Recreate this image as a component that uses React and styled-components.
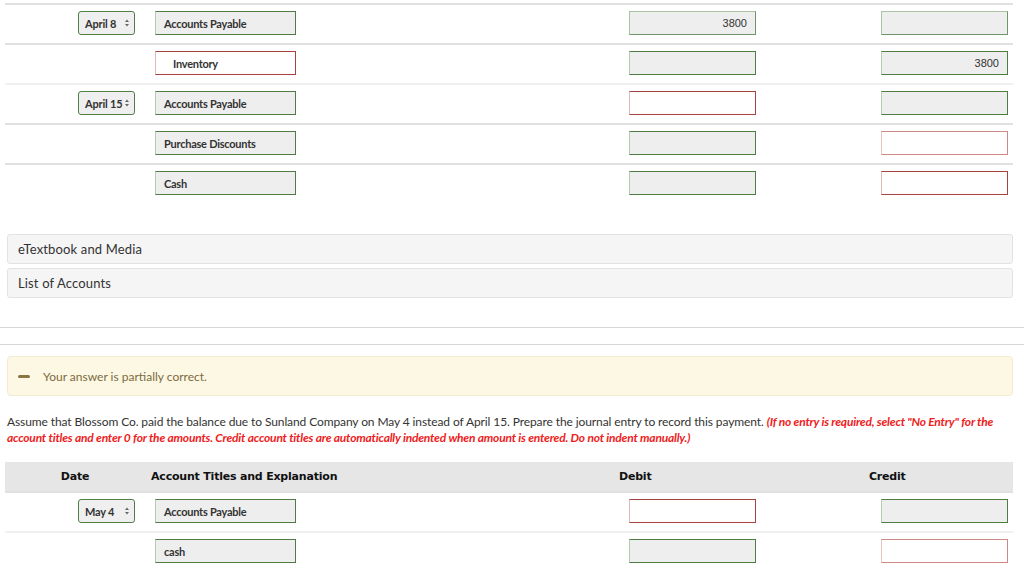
import React from "react";
import styled, { createGlobalStyle, css } from "styled-components";

const GlobalStyle = createGlobalStyle`
  html, body {
    margin: 0;
    padding: 0;
    background: #fff;
    font-family: Lato, "Open Sans", Arial, sans-serif;
    color: #333;
  }
`;

const firstEntries = [
  { date: "April 8", account: "Accounts Payable", accTone: "ok", debit: { tone: "okLight", value: "3800", filled: true }, credit: { tone: "okLight", filled: true } },
  { account: "Inventory", accTone: "bad", indent: true, debit: { tone: "ok", filled: true }, credit: { tone: "ok", value: "3800", filled: true } },
  { date: "April 15", account: "Accounts Payable", accTone: "ok", faintTop: true, debit: { tone: "bad" }, credit: { tone: "ok", filled: true } },
  { account: "Purchase Discounts", accTone: "ok", debit: { tone: "ok", filled: true }, credit: { tone: "badLight" } },
  { account: "Cash", accTone: "ok", debit: { tone: "ok", filled: true }, credit: { tone: "bad" } },
];

const secondEntries = [
  { date: "May 4", account: "Accounts Payable", accTone: "ok", debit: { tone: "bad" }, credit: { tone: "ok", filled: true } },
  { account: "cash", accTone: "ok", faintTop: true, debit: { tone: "ok", filled: true }, credit: { tone: "badLight" } },
];

const Page = styled.div`
  padding-top: 3px;
`;

const Journal = styled.div`
  margin: 0 11px 0 5px;
`;

const Row = styled.div`
  box-sizing: border-box;
  display: grid;
  grid-template-columns: 140px 484px 252px 1fr;
  align-items: start;
  height: 40px;
  padding-top: 6px;
  border-top: 2px solid ${(p) => (p.$faint ? "#f0f0f0" : "#e1e1e1")};
`;

const DateCell = styled.div`
  display: flex;
  justify-content: flex-end;
  padding-right: 10px;
`;

const Cell = styled.div`
  display: flex;
  padding-left: ${(p) => p.$pad || 0}px;
`;

const Select = styled.div`
  box-sizing: border-box;
  width: 57px;
  height: 24px;
  border: 1px solid #4f7f45;
  border-radius: 3px;
  background: #efefef;
  display: flex;
  align-items: center;
  justify-content: space-between;
  padding: 0 4px 0 6px;
  font-size: 11px;
  font-weight: 700;
  letter-spacing: -0.2px;
  white-space: nowrap;
  color: #333;
`;

const tones = {
  ok: css`
    border-color: #4e7d44;
    border-left-color: #b4ccae;
  `,
  okLight: css`
    border-color: #a9c4a2;
    border-right-color: #6f9666;
    border-bottom-color: #6f9666;
  `,
  bad: css`
    border-color: #a4433f;
    border-left-color: #e2b8b7;
  `,
  badLight: css`
    border-color: #cf8886;
    border-left-color: #e8c2c1;
  `,
};

const Field = styled.div`
  box-sizing: border-box;
  width: ${(p) => p.$w}px;
  height: 24px;
  border: 1px solid;
  ${(p) => tones[p.$tone]}
  background: ${(p) => (p.$filled ? "#eeeeee" : "#ffffff")};
  display: flex;
  align-items: center;
  justify-content: ${(p) => (p.$num ? "flex-end" : "flex-start")};
  padding: ${(p) => (p.$num ? "0 8px 0 0" : p.$indent ? "0 0 0 17px" : "0 0 0 8px")};
  font-family: ${(p) => (p.$num ? "Arial, 'Liberation Sans', sans-serif" : "Lato, sans-serif")};
  font-size: 11px;
  font-weight: ${(p) => (p.$num ? 400 : 700)};
  letter-spacing: ${(p) => (p.$num ? "0" : "-0.25px")};
  color: #333;
`;

const Spinner = () => (
  <svg width="6" height="10" viewBox="0 0 6 10">
    <path d="M3 1.5 L5 4 H1 Z M3 8.5 L5 6 H1 Z" fill="#666" />
  </svg>
);

const EntryRow = ({ e }) => (
  <Row $faint={e.faintTop}>
    <DateCell>
      {e.date && (
        <Select>
          <span>{e.date}</span>
          <Spinner />
        </Select>
      )}
    </DateCell>
    <Cell $pad={10}>
      <Field $w={141} $tone={e.accTone} $filled={e.accTone === "ok"} $indent={e.indent}>
        {e.account}
      </Field>
    </Cell>
    <Cell>
      <Field $w={127} $num $tone={e.debit.tone} $filled={e.debit.filled}>
        {e.debit.value}
      </Field>
    </Cell>
    <Cell>
      <Field $w={127} $num $tone={e.credit.tone} $filled={e.credit.filled}>
        {e.credit.value}
      </Field>
    </Cell>
  </Row>
);

const Panels = styled.div`
  margin: 31px 11px 0 7px;
  display: flex;
  flex-direction: column;
  gap: 4px;
`;

const Panel = styled.div`
  height: 28px;
  background: #f5f5f5;
  border: 1px solid #e3e3e3;
  border-radius: 3px;
  display: flex;
  align-items: center;
  padding-left: 10px;
  font-size: 13px;
  letter-spacing: 0.15px;
  color: #333;
`;

const Divider = styled.div`
  border-top: 1px solid #d6d6d6;
  margin-top: ${(p) => p.$top}px;
`;

const Feedback = styled.div`
  margin: 11px 11px 0 7px;
  height: 38px;
  background: #fcf8e4;
  border: 1px solid #f3ead0;
  border-radius: 4px;
  display: flex;
  align-items: center;
  gap: 13px;
  padding-left: 10px;
  font-size: 12px;
  color: #7d6a3e;
`;

const Minus = styled.span`
  width: 12px;
  height: 3px;
  border-radius: 2px;
  background: #8a7442;
`;

const Question = styled.p`
  margin: 18px 11px 0 7px;
  font-size: 12px;
  line-height: 16px;
  color: #333;
  letter-spacing: -0.1px;
`;

const Note = styled.span`
  color: #ee1c1c;
  font-style: italic;
  font-weight: 700;
  letter-spacing: -0.2px;
`;

const Head = styled.div`
  margin: 16px 11px 0 5px;
  display: grid;
  grid-template-columns: 140px 474px 250px 1fr;
  align-items: center;
  height: 29px;
  background: #e6e6e6;
  font-family: "DejaVu Sans", Verdana, sans-serif;
  font-size: 11px;
  font-weight: 700;
  letter-spacing: -0.2px;
  color: #111;
`;

const HeadCell = styled.div`
  text-align: ${(p) => (p.$center ? "center" : "left")};
  padding-left: ${(p) => p.$pad || 0}px;
`;

export default function App() {
  return (
    <Page>
      <GlobalStyle />
      <Journal>
        {firstEntries.map((e, i) => (
          <EntryRow key={i} e={e} />
        ))}
      </Journal>

      <Panels>
        <Panel>eTextbook and Media</Panel>
        <Panel>List of Accounts</Panel>
      </Panels>

      <Divider $top={29} />
      <Divider $top={16} />

      <Feedback>
        <Minus />
        <span>Your answer is partially correct.</span>
      </Feedback>

      <Question>
        Assume that Blossom Co. paid the balance due to Sunland Company on May 4 instead of April 15. Prepare the journal
        entry to record this payment.{" "}
        <Note>
          (If no entry is required, select "No Entry" for the account titles and enter 0 for the amounts. Credit account
          titles are automatically indented when amount is entered. Do not indent manually.)
        </Note>
      </Question>

      <Head>
        <HeadCell $center>Date</HeadCell>
        <HeadCell $pad={6}>Account Titles and Explanation</HeadCell>
        <HeadCell>Debit</HeadCell>
        <HeadCell>Credit</HeadCell>
      </Head>
      <Journal>
        {secondEntries.map((e, i) => (
          <EntryRow key={i} e={e} />
        ))}
      </Journal>
    </Page>
  );
}
